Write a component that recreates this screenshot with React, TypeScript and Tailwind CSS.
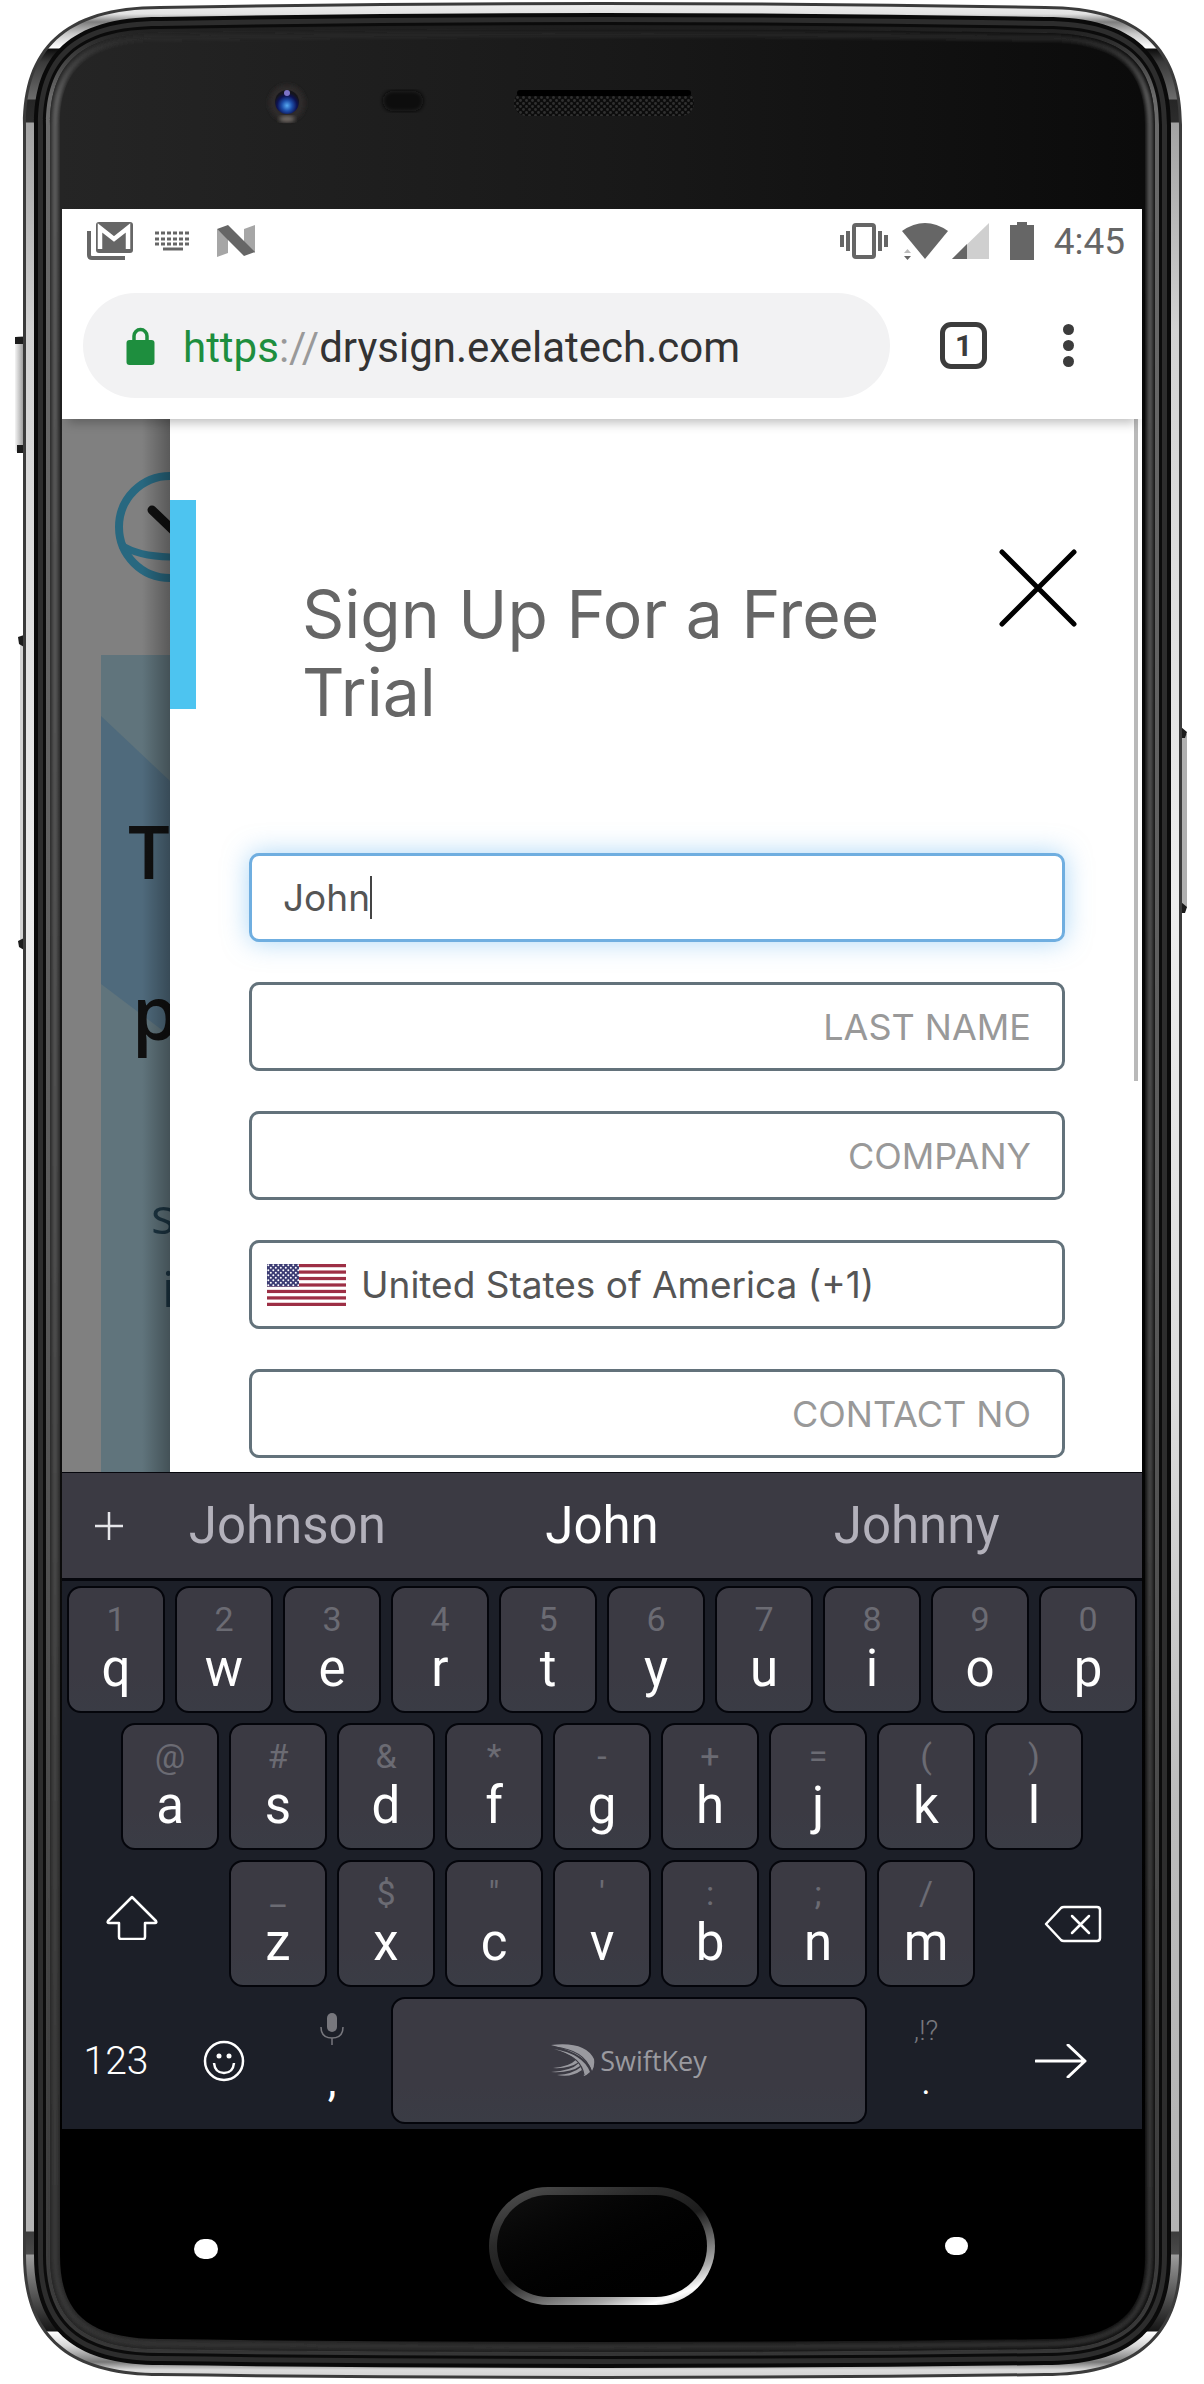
import React from "react";

/** Outline of the handset, shrunk by `d` on every side. */
function shell(d: number): string {
  const l = 23 + d;
  const r = 1182 - d;
  const t = 6 + d;
  const b = 2376 - d;
  return [
    `M${l} 125`,
    `C${l} ${50 + d * 0.6} ${62 + d * 0.6} ${t} 160 ${t}`,
    `Q602 ${t - 8} 1045 ${t}`,
    `C${1143 - d * 0.6} ${t} ${r} ${50 + d * 0.6} ${r} 125`,
    `L${r} 2255`,
    `C${r} ${2332 - d * 0.6} ${1143 - d * 0.6} ${b} 1045 ${b}`,
    `Q602 ${b + 6} 160 ${b}`,
    `C${62 + d * 0.6} ${b} ${l} ${2332 - d * 0.6} ${l} 2255Z`,
  ].join(" ");
}

const METAL: [number, string][] = [
  [0, "#f4f4f4"], [14, "#e2e2e2"], [22, "#7d7d7d"], [34, "#c9c9c9"], [48, "#ffffff"],
  [49, "#0c0c0c"], [62, "#3a3a3a"], [99, "#6c6c6c"], [100, "#262626"], [122, "#2c2c2c"],
  [123, "#a2a2a2"], [330, "#d2d2d2"], [900, "#ededed"], [1400, "#dcdcdc"], [1800, "#bcbcbc"],
  [2231, "#b4b4b4"], [2232, "#3c3c3c"], [2254, "#4a4a4a"], [2255, "#9c9c9c"], [2295, "#555555"],
  [2331, "#161616"], [2332, "#ffffff"], [2346, "#d6d6d6"], [2362, "#777777"], [2370, "#dcdcdc"], [2384, "#c8c8c8"],
];

function Handset() {
  return (
    <svg className="absolute inset-0 h-full w-full" viewBox="0 0 1204 2384" preserveAspectRatio="none" aria-hidden="true">
      <defs>
        <linearGradient id="metal" gradientUnits="userSpaceOnUse" x1="0" y1="0" x2="0" y2="2384">
          {METAL.map(([y, c]) => (
            <stop key={y} offset={y / 2384} stopColor={c} />
          ))}
        </linearGradient>
        <linearGradient id="rim" gradientUnits="userSpaceOnUse" x1="0" y1="0" x2="0" y2="2384">
          <stop offset="0.01" stopColor="#1b1b1b" />
          <stop offset="0.04" stopColor="#6a6a6a" />
          <stop offset="0.5" stopColor="#5c5c5c" />
          <stop offset="0.96" stopColor="#3c3c3c" />
          <stop offset="1" stopColor="#333333" />
        </linearGradient>
        <linearGradient id="glass" x1="0" y1="0" x2="1" y2="0">
          <stop offset="0" stopColor="#252525" />
          <stop offset="0.5" stopColor="#191919" />
          <stop offset="1" stopColor="#0b0b0b" />
        </linearGradient>
        <linearGradient id="fade" gradientUnits="userSpaceOnUse" x1="0" y1="180" x2="0" y2="2130">
          <stop offset="0" stopColor="#000000" stopOpacity="0" />
          <stop offset="1" stopColor="#000000" />
        </linearGradient>
        <linearGradient id="key" x1="0" y1="0" x2="1" y2="0">
          <stop offset="0" stopColor="#f4f4f4" />
          <stop offset="1" stopColor="#8a8a8a" />
        </linearGradient>
        <pattern id="mesh" width="6" height="6" patternUnits="userSpaceOnUse">
          <rect width="6" height="6" fill="#0c0c0c" />
          <circle cx="1.5" cy="1.5" r="1.4" fill="#303030" />
          <circle cx="4.5" cy="4.5" r="1.4" fill="#303030" />
        </pattern>
        <radialGradient id="lens" cx="0.5" cy="0.65" r="0.55">
          <stop offset="0" stopColor="#57a9f2" />
          <stop offset="0.4" stopColor="#1d4da8" />
          <stop offset="0.75" stopColor="#0d1252" />
          <stop offset="1" stopColor="#15151c" />
        </radialGradient>
        <filter id="soft" x="-10%" y="-10%" width="120%" height="120%">
          <feGaussianBlur stdDeviation="2" />
        </filter>
      </defs>

      <rect x="15" y="336" width="10" height="116" rx="3" fill="url(#key)" />
      <path d="M15 337h10v7h-10zM17 445h8v8h-8z" fill="#1c1c1c" />
      <rect x="20" y="640" width="5" height="304" fill="#d4d4d4" />
      <path d="M18 637l6-2v12l-5-3zM18 941l6-3v12l-5-3z" fill="#1c1c1c" />
      <rect x="1180" y="734" width="7" height="174" fill="#b0b0b0" />
      <path d="M1181 727l6 5-2 6h-4zM1181 902l6 5-2 6h-4z" fill="#1c1c1c" />

      <path d={shell(0)} fill="#3b3b3b" />
      <path d={shell(3)} fill="url(#metal)" />
      <path d={shell(11)} fill="#0a0a0a" />
      <path d={shell(15)} fill="#2d2d2d" />
      <path d={shell(20)} fill="#0b0b0b" />
      <path d={shell(23)} fill="url(#rim)" />
      <path d={shell(27)} fill="#202020" />
      <path d={shell(27)} fill="url(#glass)" />
      <path d={shell(32)} fill="none" stroke="url(#rim)" strokeWidth="5" filter="url(#soft)" />
      <path d={shell(37)} fill="url(#glass)" />
      <path d={shell(37)} fill="url(#fade)" />

      <circle cx="287" cy="103" r="18" fill="#2e2c2a" filter="url(#soft)" />
      <circle cx="287" cy="102" r="12" fill="url(#lens)" />
      <circle cx="287" cy="93" r="3" fill="#7d74c8" />
      <ellipse cx="287" cy="119" rx="8" ry="3" fill="#77706a" filter="url(#soft)" />
      <rect x="383" y="91" width="40" height="20" rx="9" fill="#0b0b0b" filter="url(#soft)" />
      <rect x="514" y="90" width="180" height="26" rx="13" fill="url(#mesh)" />
      <path d="M520 93h168" stroke="#000000" strokeWidth="6" strokeLinecap="round" />
    </svg>
  );
}

function StatusBar() {
  return (
    <div className="flex h-[72px] items-center justify-between bg-white pr-[17px] pb-[8px] pl-[25px] text-[#666666]">
      <div className="flex items-center gap-[22px]">
        <svg className="h-[40px] w-[46px]" viewBox="0 0 46 40" aria-label="Mail">
          <path d="M2 10v24q0 3 3 3h33" fill="none" stroke="#666666" strokeWidth="4" />
          <rect x="9" y="1" width="37" height="31" rx="3" fill="#666666" />
          <path d="M13 28V7l14 11L41 7v21" fill="none" stroke="#ffffff" strokeWidth="4.5" />
        </svg>
        <svg className="h-[20px] w-[36px]" viewBox="0 0 36 20" aria-label="Keyboard">
          <path d="M0 2h36M0 8h36M0 13h36" stroke="#666666" strokeWidth="3" strokeDasharray="4 2" />
          <path d="M8 18h20" stroke="#666666" strokeWidth="3" />
        </svg>
        <svg className="ml-[3px] h-[32px] w-[40px]" viewBox="0 0 40 32" aria-label="Android N">
          <path d="M1 4l11 10v14L1 32zM39 0v28L28 18V4z" fill="#a6a6a6" />
          <path d="M1 4L12 0l27 27-11 4z" fill="#666666" />
        </svg>
      </div>
      <div className="flex items-center">
        <svg className="h-[36px] w-[48px]" viewBox="0 0 48 36" aria-label="Vibrate">
          <rect x="14" y="2" width="20" height="32" rx="2" fill="none" stroke="#666666" strokeWidth="4" />
          <path d="M2 12v12M8 8v20M46 12v12M40 8v20" stroke="#666666" strokeWidth="4" />
        </svg>
        <svg className="ml-[14px] h-[37px] w-[46px]" viewBox="0 0 46 37" aria-label="Wi-Fi">
          <path d="M0 8Q23 -8 46 8L23 36z" fill="#666666" />
          <path d="M2 33h7l-3.500 4z" fill="#666666" />
          <path d="M2 30h7l-3.500-4z" fill="#bbbbbb" />
        </svg>
        <svg className="ml-[4px] h-[36px] w-[37px]" viewBox="0 0 37 36" aria-label="Signal">
          <path d="M37 0v36H0z" fill="#cfcfcf" />
          <path d="M15 21v15H0z" fill="#666666" />
        </svg>
        <svg className="ml-[21px] h-[38px] w-[24px]" viewBox="0 0 24 38" aria-label="Battery">
          <path d="M7 0h10v3h7v35H0V3h7z" fill="#666666" />
        </svg>
        <span className="ml-[20px] pt-[2px] text-[37px] leading-[42px]">4:45</span>
      </div>
    </div>
  );
}

function Toolbar() {
  return (
    <div className="relative z-10 flex h-[138px] items-center bg-white pt-[12px] pr-[67px] pb-[21px] pl-[21px] shadow-[0_10px_10px_-6px_rgba(0,0,0,0.25)]">
      <div className="flex h-[105px] flex-1 items-center rounded-full bg-[#f2f2f3] pl-[43px]">
        <svg className="h-[38px] w-[29px]" viewBox="0 0 29 38" aria-label="Secure">
          <path d="M8 16V9a6.500 6.500 0 0 1 13 0v7" fill="none" stroke="#1e8e3e" strokeWidth="3.500" />
          <rect x="0.500" y="13" width="28" height="25" rx="3" fill="#1e8e3e" />
        </svg>
        <a href="#signup" className="ml-[28px] pt-[4px] text-[42px] leading-[50px] whitespace-nowrap text-[#333333]">
          <span className="text-[#1e8e3e]">https</span>
          <span className="text-[#999999]">://</span>
          drysign.exelatech.com
        </a>
      </div>
      <button type="button" aria-label="Open tabs" className="ml-[50px] flex size-[47px] items-center justify-center rounded-[11px] border-5 border-[#3c3c3c] text-[30px] leading-[34px] font-bold text-[#3c3c3c]">
        1
      </button>
      <button type="button" aria-label="More options" className="ml-[76px] flex w-[12px] flex-col gap-[5px]">
        <span className="size-[11px] rounded-full bg-[#3c3c3c]" />
        <span className="size-[11px] rounded-full bg-[#3c3c3c]" />
        <span className="size-[11px] rounded-full bg-[#3c3c3c]" />
      </button>
    </div>
  );
}

function Backdrop() {
  return (
    <div className="relative w-[108px] shrink-0 overflow-hidden bg-[#808080] font-['Open_Sans',sans-serif]" aria-hidden="true">
      <div className="flex h-[236px] justify-end pt-[53px]">
        <svg className="h-[110px] w-[55px] shrink-0" viewBox="0 0 55 110">
          <circle cx="55" cy="55" r="51" fill="none" stroke="#286880" strokeWidth="8" />
          <path d="M6 73Q24 85 60 85" fill="none" stroke="#286880" strokeWidth="7" />
          <path d="M37 38L60 60" stroke="#101010" strokeWidth="9" strokeLinecap="round" />
        </svg>
      </div>
      <div className="relative ml-[39px] h-[817px] bg-[#60747c]">
        <div className="absolute inset-x-0 top-[61px] h-[320px] bg-[#4f6a7c] [clip-path:polygon(0_0,100%_65px,100%_100%,0_268px)]" />
        <div className="relative pt-[156px]">
          <p className="pl-[27px] text-[74px] leading-[80px] font-semibold text-[#101010]">T</p>
          <p className="mt-[81px] pl-[31px] text-[74px] leading-[80px] font-semibold text-[#101010]">p</p>
          <p className="mt-[127px] pl-[50px] text-[50px] leading-[73px] text-[#1c3543]">s</p>
          <p className="pl-[61px] text-[50px] leading-[73px] text-[#1c3543]">i</p>
        </div>
      </div>
      <div className="absolute inset-y-0 right-0 w-[28px] bg-linear-to-r from-black/0 to-black/30" />
    </div>
  );
}

function Flag() {
  return (
    <svg className="h-[42px] w-[79px] shrink-0" viewBox="0 0 79 42" aria-hidden="true">
      <defs>
        <pattern id="stars" width="5" height="5" patternUnits="userSpaceOnUse">
          <circle cx="1.300" cy="1.300" r="1" fill="#ffffff" />
          <circle cx="3.800" cy="3.800" r="1" fill="#ffffff" />
        </pattern>
      </defs>
      <rect width="79" height="42" fill="#ffffff" />
      {[0, 1, 2, 3, 4, 5, 6].map((i) => (
        <rect key={i} y={i * 6.46} width="79" height="3.230" fill="#9d2f45" />
      ))}
      <rect width="32" height="22.600" fill="#3b3b73" />
      <rect width="32" height="22.600" fill="url(#stars)" />
    </svg>
  );
}

const FIELD = "flex h-[89px] items-center rounded-[10px] border-3 border-[#63727b] bg-white";

function EmptyField({ id, label }: { id: string; label: string }) {
  return (
    <div className={FIELD}>
      <label htmlFor={id} className="sr-only">{label}</label>
      <input id={id} placeholder={label} className="w-full px-[31px] text-right text-[36px] leading-[48px] text-[#555555] outline-none placeholder:text-[#999999]" />
    </div>
  );
}

function SignUp() {
  return (
    <section id="signup" className="relative min-w-0 flex-1 bg-white font-['Inter',sans-serif]">
      <div className="absolute top-0 right-[4px] h-[662px] w-[4px] bg-[#b9b9b9]" />
      <header className="flex items-start">
        <div className="mt-[81px] h-[209px] w-[26px] shrink-0 bg-[#4dc4f0]" />
        <h1 className="mt-[156px] ml-[106px] flex-1 pr-[60px] text-[66px] leading-[78px] text-[#666666]">Sign Up For a Free Trial</h1>
        <button type="button" aria-label="Close" className="mt-[130px] mr-[65px] shrink-0">
          <svg className="size-[78px]" viewBox="0 0 78 78">
            <path d="M3 3l72 72M75 3L3 75" stroke="#000000" strokeWidth="5" strokeLinecap="round" />
          </svg>
        </button>
      </header>
      <form className="mt-[122px] flex flex-col gap-[40px] pr-[77px] pb-[14px] pl-[79px]">
        <div className="flex h-[89px] items-center rounded-[10px] border-3 border-[#6faee0] bg-white pl-[31px] shadow-[0_0_26px_rgba(90,175,240,0.5)]">
          <label htmlFor="first" className="sr-only">First name</label>
          <input id="first" defaultValue="John" className="field-sizing-content text-[37px] leading-[48px] text-[#555555] caret-transparent outline-none" />
          <span className="h-[43px] w-[2px] bg-[#444444]" />
        </div>
        <EmptyField id="last" label="LAST NAME" />
        <EmptyField id="company" label="COMPANY" />
        <div className="flex h-[89px] items-center rounded-[10px] border-3 border-[#63727b] bg-white pl-[15px]">
          <Flag />
          <label htmlFor="country" className="sr-only">Country</label>
          <select id="country" className="ml-[15px] flex-1 appearance-none text-[37px] leading-[48px] text-[#555555] outline-none">
            <option>United States of America (+1)</option>
          </select>
        </div>
        <EmptyField id="contact" label="CONTACT NO" />
      </form>
    </section>
  );
}

function Key({ hint, letter, start }: { hint: string; letter: string; start?: string }) {
  return (
    <button
      type="button"
      className={`col-span-2 mx-[5px] flex h-[127px] flex-col items-center rounded-[14px] border-2 border-[#04050b] bg-linear-to-b from-[#3b3a43] from-70% to-[#3a3c45] pt-[11px] ${start ?? ""}`}
    >
      <span className="text-[34px] leading-[40px] text-[#6b6b73]">{hint}</span>
      <span className="text-[51px] leading-[60px] text-white">{letter}</span>
    </button>
  );
}

const ROW = "grid grid-cols-20";

function Keyboard() {
  const top = "qwertyuiop".split("");
  const home = "asdfghjkl".split("");
  const low = "zxcvbnm".split("");
  return (
    <div className="bg-[#1c1f28]">
      <div className="flex h-[109px] items-center border-t border-b-3 border-[#05060c] bg-[#3b3a43] pr-[68px]">
        <button type="button" aria-label="Add" className="flex w-[68px] justify-end pr-[7px]">
          <svg className="size-[28px]" viewBox="0 0 28 28">
            <path d="M14 0v28M0 14h28" stroke="#e6e6ea" strokeWidth="2.500" />
          </svg>
        </button>
        <button type="button" className="flex-1 text-[51px] leading-[60px] text-[#b3b1bb]">Johnson</button>
        <button type="button" className="flex-1 text-[51px] leading-[60px] text-white">John</button>
        <button type="button" className="flex-1 text-[51px] leading-[60px] text-[#b3b1bb]">Johnny</button>
      </div>
      <div className="flex flex-col gap-[10px] pt-[5px] pb-[5px]">
        <div className={ROW}>
          {top.map((k, i) => <Key key={k} letter={k} hint={"1234567890"[i]} />)}
        </div>
        <div className={ROW}>
          {home.map((k, i) => <Key key={k} letter={k} hint={"@#&*-+=()"[i]} start={i === 0 ? "col-start-2" : undefined} />)}
        </div>
        <div className={ROW}>
          <button type="button" aria-label="Shift" className="col-span-3 flex items-center justify-center pr-[22px] pb-[12px]">
            <svg className="h-[45px] w-[52px]" viewBox="0 0 52 45">
              <path d="M26 2L50 26q1 2-1 2H39v14q0 2-2 2H15q-2 0-2-2V28H3q-2 0-1-2z" fill="none" stroke="#ffffff" strokeWidth="2.500" strokeLinejoin="round" />
            </svg>
          </button>
          {low.map((k, i) => <Key key={k} letter={k} hint={"_$\"':;/"[i]} />)}
          <button type="button" aria-label="Backspace" className="col-span-3 flex items-center justify-center pl-[24px]">
            <svg className="h-[38px] w-[58px]" viewBox="0 0 58 38">
              <path d="M2 19L17 3q1-1 3-1h33q3 0 3 3v28q0 3-3 3H20q-2 0-3-1z" fill="none" stroke="#ffffff" strokeWidth="2.500" strokeLinejoin="round" />
              <path d="M28 11l17 17M45 11L28 28" stroke="#ffffff" strokeWidth="2.500" strokeLinecap="round" />
            </svg>
          </button>
        </div>
        <div className={ROW}>
          <button type="button" className="col-span-2 flex items-center justify-center text-[39px] leading-[46px] font-light text-white">123</button>
          <button type="button" aria-label="Emoji" className="col-span-2 flex items-center justify-center">
            <svg className="size-[42px]" viewBox="0 0 42 42">
              <circle cx="21" cy="21" r="19" fill="none" stroke="#ffffff" strokeWidth="2.500" />
              <path d="M11 23q1 10 10 10t10-10" fill="none" stroke="#ffffff" strokeWidth="2.500" />
              <circle cx="16" cy="16" r="2.500" fill="#ffffff" />
              <circle cx="26" cy="16" r="2.500" fill="#ffffff" />
            </svg>
          </button>
          <button type="button" aria-label="Comma or voice input" className="col-span-2 flex flex-col items-center pt-[16px]">
            <svg className="h-[32px] w-[24px]" viewBox="0 0 24 32">
              <rect x="7" y="0" width="10" height="19" rx="5" fill="#77777d" />
              <path d="M1 14q0 11 11 11t11-11M12 25v7" fill="none" stroke="#77777d" strokeWidth="1.500" />
            </svg>
            <span className="mt-[8px] text-[44px] leading-[56px] text-white">,</span>
          </button>
          <button type="button" className="col-span-9 mx-[5px] flex h-[127px] items-center justify-center gap-[5px] rounded-[14px] border-2 border-[#04050b] bg-linear-to-b from-[#3b3a43] from-70% to-[#3a3c45] text-[#9a9aa0]">
            <svg className="h-[33px] w-[44px]" viewBox="0 0 44 33" aria-hidden="true">
              <path d="M0 1Q34 -3 43 15Q44 22 41 27Q36 10 0 1Z" fill="#9a9aa0" />
              <path d="M3 5Q32 10 39 28Q36 31 33 32Q30 12 3 5Z" fill="#9a9aa0" />
              <path d="M0 28Q20 27 28 19L29 22Q20 29 0 28Z" fill="#9a9aa0" />
              <path d="M6 31Q22 30 30 23L31 26Q20 34 6 31Z" fill="#9a9aa0" />
              <path d="M2 24Q18 23 26 15L28 18Q18 25 2 24Z" fill="#9a9aa0" />
              <path d="M3 3Q34 6 40 27M8 8Q30 13 33 31" fill="none" stroke="#3b3a43" strokeWidth="1.200" />
            </svg>
            <span className="font-['Open_Sans',sans-serif] text-[27px] leading-[36px]">SwiftKey</span>
          </button>
          <button type="button" aria-label="Period" className="col-span-2 flex flex-col items-center pt-[16px]">
            <span className="text-[28px] leading-[36px] font-light text-[#77777d]">,!?</span>
            <span className="mt-[8px] text-[34px] leading-[50px] text-white">.</span>
          </button>
          <button type="button" aria-label="Next" className="col-span-3 flex items-center justify-center">
            <svg className="h-[34px] w-[52px]" viewBox="0 0 52 34">
              <path d="M1 17h49M33 1l17 16-17 16" fill="none" stroke="#ffffff" strokeWidth="3" strokeLinecap="round" strokeLinejoin="round" />
            </svg>
          </button>
        </div>
      </div>
    </div>
  );
}

export default function App() {
  return (
    <div className="relative overflow-hidden bg-white px-[62px] pt-[209px] font-['Roboto',sans-serif]">
      <Handset />
      <main className="relative">
        <StatusBar />
        <Toolbar />
        <div className="flex">
          <Backdrop />
          <SignUp />
        </div>
        <Keyboard />
      </main>
      <nav className="relative grid grid-cols-[1fr_226px_1fr] items-center pt-[58px] pb-[79px]">
        <button type="button" aria-label="Recent apps" className="mt-[6px] ml-[132px] h-[20px] w-[24px] justify-self-start rounded-full bg-white" />
        <button type="button" aria-label="Home" className="h-[118px] rounded-full bg-[linear-gradient(160deg,#555555_0%,#2a2a2a_30%,#1c1c1c_50%,#aaaaaa_78%,#ffffff_88%,#9a9a9a_100%)] p-[8px]">
          <span className="block h-full w-full rounded-full bg-linear-to-br from-[#101010] to-black" />
        </button>
        <button type="button" aria-label="Back" className="mr-[174px] h-[18px] w-[23px] justify-self-end rounded-full bg-white" />
      </nav>
    </div>
  );
}
